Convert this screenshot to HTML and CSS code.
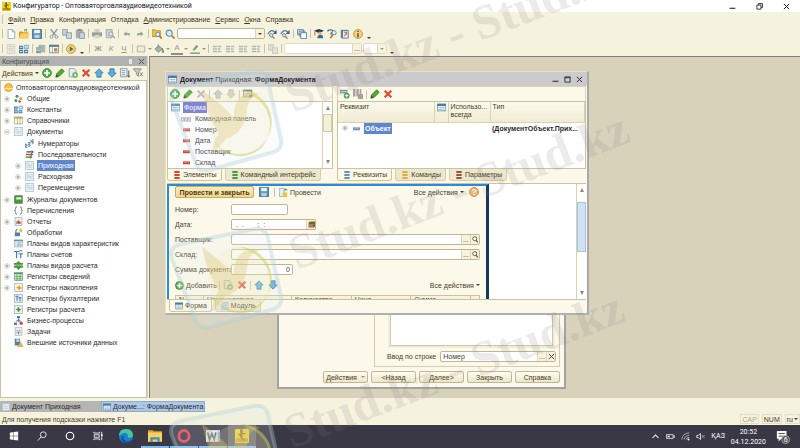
FILE: index.html
```html
<!DOCTYPE html>
<html lang="ru">
<head>
  <meta charset="utf-8">
  <title>Конфигуратор</title>
  <link rel="stylesheet" href="styles.css">
</head>
<body>
  <svg class="sprite" aria-hidden="true">
    <symbol id="i-1c" viewBox="0 0 12 12"><rect width="12" height="12" rx="1" fill="#f0d018"/><path d="M1 11V8h10v3z" fill="#b89400"/><path d="M5 1h1v6H5zM3 4l5 6M6 4h3" stroke="#5c4a08" fill="none"/></symbol>
    <symbol id="i-new" viewBox="0 0 12 12"><path d="M2.500.500h5l3 3v8h-8z" fill="#fff" stroke="#7fa3bd"/><path d="M7.500.500v3h3" fill="#cfe2ee" stroke="#7fa3bd"/></symbol>
    <symbol id="i-open" viewBox="0 0 12 12"><path d="M0 3h4l1 1h6v7H0z" fill="#d99a1c"/><path d="M2 5h10l-1 6H0z" fill="#f6cf62"/><path d="M7 3V0h2v3" fill="none" stroke="#4b8f3a"/></symbol>
    <symbol id="i-save" viewBox="0 0 12 12"><path d="M.500.500h11v11h-11z" fill="#5f94b8" stroke="#34698c"/><path d="M2.500 1h7v4h-7z" fill="#e9f3f8"/><path d="M3 7h6v4H3z" fill="#b9d2e0"/></symbol>
    <symbol id="i-cut" viewBox="0 0 12 12"><path d="M2 0l6 8M10 0L4 8" stroke="#8795a0" stroke-width="1.500"/><circle cx="3" cy="9.500" r="1.700" fill="none" stroke="#7c93a8"/><circle cx="9" cy="9.500" r="1.700" fill="none" stroke="#7c93a8"/></symbol>
    <symbol id="i-copy" viewBox="0 0 12 12"><path d="M.500.500h6v7h-6z" fill="#c3ccd0" stroke="#8ea0aa"/><path d="M5.500 4.500h6v7h-6z" fill="#cdd9de" stroke="#7c96a6"/></symbol>
    <symbol id="i-paste" viewBox="0 0 12 12"><path d="M1 1h9v10H1z" fill="#a8adad"/><path d="M3 0h5v2H3z" fill="#848a8a"/><path d="M5.500 4.500h6v7h-6z" fill="#c7d1d6" stroke="#8799a3"/></symbol>
    <symbol id="i-print" viewBox="0 0 12 12"><path d="M3 0h6v4H3z" fill="#cfcfc6"/><path d="M0 4h12v5H0z" fill="#9a9c9b"/><path d="M3 7h6v4H3z" fill="#d8d6ca"/></symbol>
    <symbol id="i-preview" viewBox="0 0 12 12"><path d="M1.500.500h7v10h-7z" fill="#d0d4d2" stroke="#99a2a4"/><circle cx="7" cy="6" r="2.500" fill="#dfe8ec" stroke="#8a979d"/><path d="M9 8l3 3" stroke="#8a979d" stroke-width="1.500"/></symbol>
    <symbol id="i-undo" viewBox="0 0 12 12"><path d="M1 6l4-4v2.500h5V9H8.500V7H5v2.500z" fill="#8fa095"/></symbol>
    <symbol id="i-redo" viewBox="0 0 12 12"><path d="M11 6L7 2v2.500H2V9h1.500V7H7v2.500z" fill="#86a48d"/></symbol>
    <symbol id="i-findf" viewBox="0 0 12 12"><path d="M0 1h4l1 1h5v7H0z" fill="#f0c04a" stroke="#c08a1c"/><circle cx="7" cy="6.500" r="2.500" fill="#e4f1f8" stroke="#54809c"/><path d="M9 8.500l3 3" stroke="#b0702a" stroke-width="2"/></symbol>
    <symbol id="i-find" viewBox="0 0 12 12"><circle cx="5" cy="5" r="3.700" fill="#d8ebf7" stroke="#6089a6" stroke-width="1.300"/><path d="M8 8l3.500 3.500" stroke="#bd7d33" stroke-width="2"/></symbol>
    <symbol id="i-lens" viewBox="0 0 12 12"><circle cx="6.500" cy="4.500" r="3.500" fill="#fffdf2" stroke="#5c4d26" stroke-width="1.500"/><path d="M9 7.500l2.500 3.500" stroke="#5c4d26" stroke-width="2"/></symbol>
    <symbol id="i-jump" viewBox="0 0 12 12"><path d="M1 6Q5-1 10 4" fill="none" stroke="#4d7c9c" stroke-width="1.500"/><path d="M11.500 1v5H7z" fill="#2c6288"/><circle cx="5" cy="7.500" r="2" fill="#dbe9f0" stroke="#617c8c"/><path d="M6.500 9l2.500 2.500" stroke="#9a7034" stroke-width="1.500"/></symbol>
    <symbol id="i-wins" viewBox="0 0 12 12"><path d="M.500.500h7v6h-7zM2.500 2.500h7v6h-7z" fill="#d3e5ef" stroke="#4f83a5"/><path d="M4.500 4.500h7v7h-7z" fill="#fff" stroke="#3f7496"/></symbol>
    <symbol id="i-grad" viewBox="0 0 12 12"><path d="M0 2l6-2 6 2-6 3z" fill="#23384d"/><circle cx="7" cy="5" r="2" fill="#e7a870"/><path d="M4 11q0-4 4-4 3 0 3 4z" fill="#2a6f9c"/><path d="M1 3v5" stroke="#c64f26"/></symbol>
    <symbol id="i-qmag" viewBox="0 0 12 12"><path d="M1 3q0-2 3-2t3 2q0 1-2 2v2" fill="none" stroke="#447899" stroke-width="1.700"/><circle cx="8.500" cy="4.500" r="2.500" fill="#eaf3f7" stroke="#5a7585"/><path d="M7 6.500L4 11" stroke="#ba7c35" stroke-width="2"/></symbol>
    <symbol id="i-book" viewBox="0 0 12 12"><path d="M1 1h8v10H1z" fill="#4e7ea5"/><path d="M3 2h7v9H3z" fill="#e6eef2" stroke="#59778a"/><path d="M5 9l3-5M5 4h3v3" stroke="#c4502b" fill="none"/></symbol>
    <symbol id="i-info" viewBox="0 0 12 12"><circle cx="6" cy="6" r="5.300" fill="#f4d27a" stroke="#b98a3a"/><path d="M6 2v1.500M6 5v5" stroke="#5f4a24" stroke-width="1.700"/></symbol>
    <symbol id="i-help" viewBox="0 0 12 12"><circle cx="6" cy="6" r="5.300" fill="#f7b672" stroke="#c0793b"/><path d="M4 4.500Q4 3 6 3t2 1.500Q8 5.500 6 6.500V7.500M6 8.500V10" stroke="#fff" stroke-width="1.300" fill="none"/></symbol>
    <symbol id="i-form" viewBox="0 0 12 12"><path d="M.500 1.500h11v9H.500z" fill="#edf4f8" stroke="#5d88a8"/><path d="M0 1h12v3H0z" fill="#4a7da4"/><path d="M2 6h8M2 8.500h8" stroke="#8fb0c4"/></symbol>
    <symbol id="i-check" viewBox="0 0 12 12"><path d="M.500 1.500h10v8H.500z" fill="#edf4f8" stroke="#5d7488"/><path d="M0 1h11v2H0z" fill="#5d7488"/><path d="M2 5.500h6M2 7.500h4" stroke="#8fa4b4"/><path d="M7 7h2V5l3 3-3 3V9H7z" fill="#94583a"/></symbol>
    <symbol id="i-mod" viewBox="0 0 12 12"><path d="M1.500.500h9v11h-9z" fill="#d8e5ed" stroke="#90abbd"/><path d="M3 3h6M3 5.500h6M3 8h6" stroke="#86a5ba"/></symbol>
    <symbol id="i-db" viewBox="0 0 12 12"><path d="M3 1h8v9H3z" fill="#abb5b5"/><path d="M0 4h6v7H0z" fill="#8b9b9d"/><path d="M0 6h6M0 8h6" stroke="#c8d0cf"/></symbol>
    <symbol id="i-tbl" viewBox="0 0 12 12"><path d="M.500 1.500h11v9H.500z" fill="#f4f6f4" stroke="#6f8796"/><path d="M0 1h12v2.500H0z" fill="#5e7f96"/><path d="M6 5h4v4H6z" fill="#c98450"/><path d="M4 3v8" stroke="#8fa4b0"/></symbol>
    <symbol id="i-play" viewBox="0 0 12 12"><circle cx="6" cy="6" r="5.300" fill="#ffd257" stroke="#aa9153"/><path d="M4.500 3v6L9 6z" fill="#2f6fa6"/></symbol>
    <symbol id="i-box" viewBox="0 0 12 12"><path d="M1.500 2.500h9v7h-9z" fill="#efecd9" stroke="#a9a896"/></symbol>
    <symbol id="i-fill" viewBox="0 0 12 12"><path d="M1 6l5-4 4 4-5 4z" fill="#aab5a3" stroke="#7b8878"/><path d="M10 5l2 5h-2zM5 0v5" fill="#6f8f7a" stroke="#7b8878"/></symbol>
    <symbol id="i-pen2" viewBox="0 0 12 12"><path d="M3 7l5-6 2 2-5 5z" fill="#8d978b"/><path d="M0 10h12v2H0z" fill="#8da78f"/></symbol>
    <symbol id="i-al" viewBox="0 0 12 12"><path d="M1 2h5v2H1zM1 5h5v2H1zM1 8h5v2H1zM7 2h4v2H7zM7 5h3v2H7zM7 8h4v2H7z" fill="#b3b9b3"/></symbol>
    <symbol id="i-add" viewBox="0 0 12 12"><circle cx="6" cy="6" r="5.300" fill="#55b14c" stroke="#2f8436"/><path d="M6 2.500v7M2.500 6h7" stroke="#fff" stroke-width="2"/></symbol>
    <symbol id="i-pen" viewBox="0 0 12 12"><path d="M1 11l1-4 6-6 3 3-6 6z" fill="#4fae2c" stroke="#2b7a1d"/><path d="M1 11l1-3 2 2z" fill="#3b3b20"/></symbol>
    <symbol id="i-addcp" viewBox="0 0 12 12"><path d="M1.500.500h6l2 2v8h-8z" fill="#e5eef3" stroke="#7d9db2"/><circle cx="8.500" cy="8.500" r="3.300" fill="#4da845"/><path d="M8.500 6.500v4M6.500 8.500h4" stroke="#fff" stroke-width="1.200"/></symbol>
    <symbol id="i-addattr" viewBox="0 0 12 12"><path d="M0 1h9v4H0z" fill="#7a9ab0"/><path d="M1 3h7" stroke="#dbe7ee"/><circle cx="8" cy="8" r="3.500" fill="#4da845"/><path d="M8 6v4M6 8h4" stroke="#fff" stroke-width="1.200"/></symbol>
    <symbol id="i-del" viewBox="0 0 12 12"><path d="M2 2l8 8M10 2l-8 8" stroke="#df4a34" stroke-width="2.600"/></symbol>
    <symbol id="i-delg" viewBox="0 0 12 12"><path d="M2 2l8 8M10 2l-8 8" stroke="#b4b5b0" stroke-width="2.400"/></symbol>
    <symbol id="i-up" viewBox="0 0 12 12"><path d="M6 1l5 5H8.500v5h-5V6H1z" fill="#60aede" stroke="#2a7cb4"/></symbol>
    <symbol id="i-down" viewBox="0 0 12 12"><path d="M6 11l5-5H8.500V1h-5v5H1z" fill="#60aede" stroke="#2a7cb4"/></symbol>
    <symbol id="i-sort" viewBox="0 0 12 12"><path d="M.500.500h8v10h-8z" fill="#dfe9ee" stroke="#7999ad"/><path d="M2 3h4M2 5.500h4M2 8h4" stroke="#86a5ba"/><path d="M10.500 3v8M9 9l1.500 2L12 9" stroke="#264e6e" fill="none"/></symbol>
    <symbol id="i-filter" viewBox="0 0 12 12"><path d="M0 1h10L6.500 5v5L4 8V5z" fill="#c9ccc0" stroke="#83877c"/><path d="M8 5l4 5M12 5l-4 5" stroke="#617a8d"/></symbol>
    <symbol id="i-root" viewBox="0 0 12 12"><circle cx="6" cy="6" r="5.300" fill="#f8c33a" stroke="#c99629"/><path d="M1 7.500h10" stroke="#fff1b8" stroke-width="1.500"/></symbol>
    <symbol id="i-common" viewBox="0 0 12 12"><circle cx="4" cy="3" r="2" fill="#3f86b8"/><circle cx="2.500" cy="8.500" r="2" fill="#4aa04a"/><circle cx="9" cy="6" r="2" fill="#e2a32d"/><circle cx="7.500" cy="10" r="1.700" fill="#d04a33"/></symbol>
    <symbol id="i-const" viewBox="0 0 12 12"><path d="M0 2h5v4H0zM0 7h5v4H0zM6 7h5v4H6z" fill="#44799f"/><path d="M6 1h6v5H6z" fill="#8fb8d2"/><path d="M1 4h3M1 9h3M7 9h3M7 3.500h4" stroke="#fff"/></symbol>
    <symbol id="i-ref" viewBox="0 0 12 12"><path d="M.500 1.500h11v9H.500z" fill="#fffbe8" stroke="#a2a489"/><path d="M0 1h12v2.500H0z" fill="#c0ae62"/><path d="M4.500 2v9M8 2v9" stroke="#a2a489"/></symbol>
    <symbol id="i-doc" viewBox="0 0 12 12"><path d="M.500.500h11v11H.500z" fill="#edf4f8" stroke="#9bb4c5"/><path d="M2 3h4M2 5.500h8M2 8h8M8 3h2" stroke="#a9c1d0"/></symbol>
    <symbol id="i-num" viewBox="0 0 12 12"><path d="M0 7h2.500v2H.500v2H3M4 4.500h2.500v5H4M4 7h2M8 1v3h3M10.500 0v7" fill="none" stroke="#336f9f" stroke-width="1.200"/></symbol>
    <symbol id="i-seq" viewBox="0 0 12 12"><path d="M2 2.500h8" stroke="#2f76aa" stroke-width="2"/><path d="M9 0l3 2.500L9 5z" fill="#2f76aa"/><path d="M1 6h8" stroke="#d8412e" stroke-width="2"/><path d="M8 3.500L11 6 8 8.500z" fill="#d8412e"/><path d="M1 9.500h7" stroke="#44993c" stroke-width="2"/><path d="M7 7l3 2.500L7 12z" fill="#44993c"/></symbol>
    <symbol id="i-jour" viewBox="0 0 12 12"><path d="M1 1h10v10H1z" fill="#4c9c3a" stroke="#2e7328"/><path d="M3 3h7v3H3z" fill="#e3f1d8"/></symbol>
    <symbol id="i-enum" viewBox="0 0 12 12"><path d="M4 1Q2 1 2 3v1.500Q2 6 .500 6 2 6 2 7.500V9q0 2 2 2M8 1q2 0 2 2v1.500Q10 6 11.500 6 10 6 10 7.500V9q0 2-2 2" fill="none" stroke="#5c87a5" stroke-width="1.300"/></symbol>
    <symbol id="i-rep" viewBox="0 0 12 12"><path d="M1.500.500h9v11h-9z" fill="#e6eef2" stroke="#96aebd"/><path d="M3 9V6h2v3z" fill="#4c9c3a"/><path d="M5 9V4l4 3v2z" fill="#d8412e"/></symbol>
    <symbol id="i-col" viewBox="0 0 12 12"><path d="M0 0h3v9H0zM4 0h3v9H4zM8 0h2v6H8z" fill="#a3a3a0"/><path d="M6 6h6v6H6z" fill="#b9998f"/></symbol>
    <symbol id="i-proc" viewBox="0 0 12 12"><path d="M1 6h7v5H1z" fill="#4d83a8"/><path d="M2.500 6V4q0-2 2-2" fill="none" stroke="#3d6684" stroke-width="1.300"/><path d="M9 0l1 2 2 .500-1.500 1.500.500 2L9 5 7 6l.500-2L6 2.500 8 2z" fill="#f3b62e"/></symbol>
    <symbol id="i-char" viewBox="0 0 12 12"><path d="M.500 1.500h11v9H.500z" fill="#edf4f8" stroke="#90abbd"/><path d="M0 1h12v2H0z" fill="#6a93ae"/><path d="M2 5h1M4 5h6M2 7h1M4 7h6M2 9h1M4 9h6" stroke="#7fa0b5"/></symbol>
    <symbol id="i-acc" viewBox="0 0 12 12"><path d="M0 2h7M3.500 2v9M6 5h6M9 5v6M7 1h4" fill="none" stroke="#3e7aa5" stroke-width="1.500"/></symbol>
    <symbol id="i-calc" viewBox="0 0 12 12"><path d="M6 0l3 2.500h3v2.500H0V2.500h3zM6 12l3-3h3V6.500H0V9h3z" fill="#4a9a35"/><path d="M1 5.700h10" stroke="#2e7328"/></symbol>
    <symbol id="i-rinf" viewBox="0 0 12 12"><path d="M.500.500h11v11H.500z" fill="#e6f0e3" stroke="#6f9a80"/><path d="M0 1h12v2H0z" fill="#5e8f86"/><path d="M4 3v9M8 3v9M1 6h10M1 9h10" stroke="#4c9c3a"/></symbol>
    <symbol id="i-racc" viewBox="0 0 12 12"><path d="M.500.500h11v11H.500z" fill="#fbf4dc" stroke="#90abbd"/><path d="M3 6l5-3v2h2v3H8v2z" fill="#e9a52c"/></symbol>
    <symbol id="i-rbuh" viewBox="0 0 12 12"><path d="M.500.500h11v11H.500z" fill="#e6eef5" stroke="#90abbd"/><path d="M2 3h4M4 3v6M6 5h4M8 5v5" fill="none" stroke="#3e7aa5" stroke-width="1.300"/></symbol>
    <symbol id="i-rcal" viewBox="0 0 12 12"><path d="M.500.500h11v11H.500z" fill="#eef4ea" stroke="#90abbd"/><path d="M2 6l2-1h1V3h2v2l3 1-2 1H7v2H5V7z" fill="#3d9130"/></symbol>
    <symbol id="i-bp" viewBox="0 0 12 12"><path d="M4 0h4v3H4zM0 9h4v3H0z" fill="#4581ab"/><path d="M6 3v4M2 9l4-4 4 4" stroke="#4581ab" fill="none"/><path d="M3 6l3-2 3 2-3 2z" fill="#5d92b5"/><circle cx="9.500" cy="9.500" r="2.300" fill="#d8412e"/></symbol>
    <symbol id="i-task" viewBox="0 0 12 12"><path d="M1.500.500h9v11h-9z" fill="#e6eef2" stroke="#a5b8c4"/><path d="M3 5h6M3 7.500h6" stroke="#8aa7ba"/><path d="M6 6v4" stroke="#d8412e"/></symbol>
    <symbol id="i-ext" viewBox="0 0 12 12"><path d="M1 1h7v9H1z" fill="#4d83a8"/><path d="M3 2h4v3H3z" fill="#d3e5ef"/><path d="M8.500 5l3.500 6.500H5z" fill="#f3b62e" stroke="#b5811a" stroke-width=".5"/></symbol>
    <symbol id="i-stack" viewBox="0 0 12 12"><path d="M2 0h8v3H2zM2 4.500h8v3H2zM2 9h8v3H2z" fill="currentColor"/></symbol>
    <symbol id="i-item" viewBox="0 0 12 12"><path d="M0 4h12v5H0z" fill="currentColor"/><path d="M1 5.500h10" stroke="#fff" stroke-opacity=".5"/></symbol>
    <symbol id="i-panel" viewBox="0 0 12 12"><path d="M0 4h12v5H0z" fill="#a8a8a8"/><path d="M1 5h2v3H1zM5 5h2v3H5zM9 5h2v3H9z" fill="#e6e6e6"/></symbol>
    <symbol id="i-post" viewBox="0 0 12 12"><path d="M0 .500h7v11H.500z" fill="#e5eef3" stroke="#7d9db2"/><path d="M5 6h6v6H5z" fill="#edc13e"/><path d="M6 3l3-2.500L12 3z" fill="#4a9a35"/></symbol>
    <symbol id="i-plus" viewBox="0 0 12 12"><circle cx="6" cy="6" r="5" fill="#fafafa" stroke="#b6b6b0"/><path d="M6 3v6M3 6h6" stroke="#6f6f6a" stroke-width="1.300"/></symbol>
    <symbol id="i-minus" viewBox="0 0 12 12"><circle cx="6" cy="6" r="5" fill="#fafafa" stroke="#b6b6b0"/><path d="M3 6h6" stroke="#6f6f6a" stroke-width="1.300"/></symbol>
    <symbol id="i-cal" viewBox="0 0 12 12"><path d="M1 3l2-2h9v8l-2 2H1z" fill="#786631"/><path d="M2 5h7v5H2z" fill="#a08e54"/></symbol>
    <symbol id="i-min" viewBox="0 0 12 12"><path d="M1 9h10" stroke="currentColor" stroke-width="1.700"/></symbol>
    <symbol id="i-max" viewBox="0 0 12 12"><path d="M1.500 1.500h9v9h-9zM1 3h10" fill="none" stroke="currentColor" stroke-width="1.400"/></symbol>
    <symbol id="i-restore" viewBox="0 0 12 12"><path d="M1.500 3.500h7v7h-7zM4 3V1h7v7H9" fill="none" stroke="currentColor" stroke-width="1.400"/></symbol>
    <symbol id="i-close" viewBox="0 0 12 12"><path d="M1.500 1.500l9 9M10.500 1.500l-9 9" stroke="currentColor" stroke-width="1.600"/></symbol>
    <symbol id="mark" viewBox="0 0 120 110">
      <path d="M15 17L88 2q12-2 14 9l13 58q2 10-7 13L44 100q-12 3-15-8L6 32Q2 20 15 17z" fill="#dfe9ec" fill-opacity=".18" stroke="#a9cfd6" stroke-opacity=".35" stroke-width="4"/>
      <circle cx="74" cy="52" r="32" fill="#f1e8b0" fill-opacity=".2"/>
      <path d="M74 20a32 32 0 1 1-30 44q10 24 34 22 24-4 26-30 0-26-30-36z" fill="#c3cc42" fill-opacity=".45"/>
      <path d="M36 20q20 14 32 28-1-18 12-25 10-2 14 1-12 2-13 16-2 22-21 29l-14 16q0-14 7-21Q41 46 36 20z" fill="#dcc678" fill-opacity=".36"/>
    </symbol>
  </svg>

  <div class="app">
    <header class="titlebar">
      <svg class="icon app-icon"><use href="#i-1c"/></svg>
      <span class="app-title">Конфигуратор - Оптоваяторговляаудиовидеотехникой</span>
      <div class="win-buttons">
        <button aria-label="Свернуть"><svg class="icon"><use href="#i-min"/></svg></button>
        <button aria-label="Восстановить"><svg class="icon"><use href="#i-restore"/></svg></button>
        <button aria-label="Закрыть"><svg class="icon"><use href="#i-close"/></svg></button>
      </div>
    </header>

    <nav class="menubar">
      <span class="grip"></span>
      <button><u>Ф</u>айл</button>
      <button><u>П</u>равка</button>
      <button>Конфигурация</button>
      <button>Отладка</button>
      <button><u>А</u>дминистрирование</button>
      <button><u>С</u>ервис</button>
      <button><u>О</u>кна</button>
      <button>Сп<u>р</u>авка</button>
    </nav>

    <div class="toolbar">
      <span class="grip"></span>
      <button class="tb" aria-label="Новый"><svg class="icon"><use href="#i-new"/></svg></button>
      <button class="tb" aria-label="Открыть"><svg class="icon"><use href="#i-open"/></svg></button>
      <button class="tb" aria-label="Сохранить"><svg class="icon"><use href="#i-save"/></svg></button>
      <span class="sep"></span>
      <button class="tb" aria-label="Вырезать"><svg class="icon"><use href="#i-cut"/></svg></button>
      <button class="tb" aria-label="Копировать"><svg class="icon"><use href="#i-copy"/></svg></button>
      <button class="tb" aria-label="Вставить"><svg class="icon"><use href="#i-paste"/></svg></button>
      <span class="sep"></span>
      <button class="tb" aria-label="Печать"><svg class="icon"><use href="#i-print"/></svg></button>
      <button class="tb" aria-label="Просмотр"><svg class="icon"><use href="#i-preview"/></svg></button>
      <span class="sep"></span>
      <button class="tb small" aria-label="Отменить"><svg class="icon"><use href="#i-undo"/></svg></button>
      <button class="tb small" aria-label="Повторить"><svg class="icon"><use href="#i-redo"/></svg></button>
      <span class="sep"></span>
      <button class="tb" aria-label="Найти в файлах"><svg class="icon"><use href="#i-findf"/></svg></button>
      <button class="tb" aria-label="Найти"><svg class="icon"><use href="#i-find"/></svg></button>
      <div class="combo search">
        <input type="text" aria-label="Поиск">
        <button aria-label="История поиска"><i class="caret"></i></button>
      </div>
      <button class="tb" aria-label="Найти далее"><svg class="icon"><use href="#i-jump"/></svg></button>
      <button class="tb" aria-label="Найти назад"><svg class="icon"><use href="#i-jump"/></svg></button>
      <span class="sep"></span>
      <button class="tb" aria-label="Окна"><svg class="icon"><use href="#i-wins"/></svg></button>
      <span class="sep"></span>
      <button class="tb" aria-label="Синтакс-помощник"><svg class="icon"><use href="#i-grad"/></svg></button>
      <button class="tb" aria-label="Поиск в справке"><svg class="icon"><use href="#i-qmag"/></svg></button>
      <button class="tb" aria-label="Содержание"><svg class="icon"><use href="#i-book"/></svg></button>
      <button class="tb" aria-label="О программе"><svg class="icon"><use href="#i-info"/></svg></button>
      <i class="caret low"></i>
    </div>

    <div class="toolbar second">
      <span class="grip"></span>
      <button class="tb off" aria-label="Модуль"><svg class="icon"><use href="#i-mod"/></svg></button>
      <button class="tb" aria-label="Конфигурация"><svg class="icon"><use href="#i-const"/></svg></button>
      <span class="sep"></span>
      <button class="tb" aria-label="База данных"><svg class="icon"><use href="#i-db"/></svg></button>
      <button class="tb" aria-label="Таблица"><svg class="icon"><use href="#i-tbl"/></svg></button>
      <span class="sep"></span>
      <button class="tb" aria-label="Отладка"><svg class="icon"><use href="#i-play"/></svg></button>
      <i class="caret low"></i>
      <span class="sep"></span>
      <button class="tb letter"><b>Ж</b></button>
      <button class="tb letter"><em>К</em></button>
      <button class="tb letter"><u>Ч</u></button>
      <span class="sep"></span>
      <button class="tb" aria-label="Рамка"><svg class="icon"><use href="#i-box"/></svg></button>
      <i class="caret tan"></i>
      <button class="tb" aria-label="Цвет фона"><svg class="icon"><use href="#i-fill"/></svg></button>
      <i class="caret tan"></i>
      <button class="tb letter color">A</button>
      <i class="caret tan"></i>
      <button class="tb" aria-label="Цвет линии"><svg class="icon"><use href="#i-pen2"/></svg></button>
      <i class="caret tan"></i>
      <span class="sep"></span>
      <button class="tb" aria-label="Влево"><svg class="icon"><use href="#i-al"/></svg></button>
      <button class="tb" aria-label="По центру"><svg class="icon"><use href="#i-al"/></svg></button>
      <button class="tb" aria-label="Вправо"><svg class="icon"><use href="#i-al"/></svg></button>
      <button class="tb" aria-label="По ширине"><svg class="icon"><use href="#i-al"/></svg></button>
      <span class="sep"></span>
      <button class="tb off" aria-label="Копировать формат"><svg class="icon"><use href="#i-copy"/></svg></button>
      <span class="sep"></span>
      <div class="combo font-name">
        <input type="text" aria-label="Шрифт" disabled>
        <button aria-label="Выбрать шрифт" disabled>...</button>
      </div>
      <div class="combo font-size">
        <input type="text" aria-label="Размер шрифта" disabled>
        <button aria-label="Выбрать размер" disabled><i class="caret tan"></i></button>
      </div>
      <i class="caret low"></i>
    </div>

    <main class="work">
      <aside class="sidebar">
        <div class="side-title">
          <span>Конфигурация</span>
          <span class="pin"></span>
          <button aria-label="Закрыть панель"><svg class="icon"><use href="#i-close"/></svg></button>
        </div>
        <div class="side-tools">
          <button class="actions">Действия <i class="caret"></i></button>
          <button class="tb" aria-label="Добавить"><svg class="icon"><use href="#i-add"/></svg></button>
          <button class="tb" aria-label="Изменить"><svg class="icon"><use href="#i-pen"/></svg></button>
          <button class="tb" aria-label="Скопировать"><svg class="icon"><use href="#i-addcp"/></svg></button>
          <button class="tb" aria-label="Удалить"><svg class="icon"><use href="#i-del"/></svg></button>
          <button class="tb" aria-label="Вверх"><svg class="icon"><use href="#i-up"/></svg></button>
          <button class="tb" aria-label="Вниз"><svg class="icon"><use href="#i-down"/></svg></button>
          <button class="tb" aria-label="Сортировка"><svg class="icon"><use href="#i-sort"/></svg></button>
          <button class="tb" aria-label="Отбор"><svg class="icon"><use href="#i-filter"/></svg></button>
        </div>
        <div class="tree">
          <div class="node root"><svg class="icon"><use href="#i-root"/></svg><span>Оптоваяторговляаудиовидеотехникой</span></div>
          <ul>
            <li class="node"><svg class="tog"><use href="#i-plus"/></svg><svg class="icon"><use href="#i-common"/></svg><span>Общие</span></li>
            <li class="node"><svg class="tog"><use href="#i-plus"/></svg><svg class="icon"><use href="#i-const"/></svg><span>Константы</span></li>
            <li class="node"><svg class="tog"><use href="#i-plus"/></svg><svg class="icon"><use href="#i-ref"/></svg><span>Справочники</span></li>
            <li class="node"><svg class="tog"><use href="#i-minus"/></svg><svg class="icon"><use href="#i-doc"/></svg><span>Документы</span></li>
            <li>
              <ul class="nested">
                <li class="node"><span class="tog"></span><svg class="icon"><use href="#i-num"/></svg><span>Нумераторы</span></li>
                <li class="node"><span class="tog"></span><svg class="icon"><use href="#i-seq"/></svg><span>Последовательности</span></li>
                <li class="node selected"><svg class="tog"><use href="#i-plus"/></svg><svg class="icon"><use href="#i-doc"/></svg><span>Приходная</span></li>
                <li class="node"><svg class="tog"><use href="#i-plus"/></svg><svg class="icon"><use href="#i-doc"/></svg><span>Расходная</span></li>
                <li class="node"><svg class="tog"><use href="#i-plus"/></svg><svg class="icon"><use href="#i-doc"/></svg><span>Перемещение</span></li>
              </ul>
            </li>
            <li class="node"><svg class="tog"><use href="#i-plus"/></svg><svg class="icon"><use href="#i-jour"/></svg><span>Журналы документов</span></li>
            <li class="node"><span class="tog"></span><svg class="icon"><use href="#i-enum"/></svg><span>Перечисления</span></li>
            <li class="node"><svg class="tog"><use href="#i-plus"/></svg><svg class="icon"><use href="#i-rep"/></svg><span>Отчеты</span></li>
            <li class="node"><span class="tog"></span><svg class="icon"><use href="#i-proc"/></svg><span>Обработки</span></li>
            <li class="node"><span class="tog"></span><svg class="icon"><use href="#i-char"/></svg><span>Планы видов характеристик</span></li>
            <li class="node"><span class="tog"></span><svg class="icon"><use href="#i-acc"/></svg><span>Планы счетов</span></li>
            <li class="node"><svg class="tog"><use href="#i-plus"/></svg><svg class="icon"><use href="#i-calc"/></svg><span>Планы видов расчета</span></li>
            <li class="node"><svg class="tog"><use href="#i-plus"/></svg><svg class="icon"><use href="#i-rinf"/></svg><span>Регистры сведений</span></li>
            <li class="node"><svg class="tog"><use href="#i-plus"/></svg><svg class="icon"><use href="#i-racc"/></svg><span>Регистры накопления</span></li>
            <li class="node"><span class="tog"></span><svg class="icon"><use href="#i-rbuh"/></svg><span>Регистры бухгалтерии</span></li>
            <li class="node"><span class="tog"></span><svg class="icon"><use href="#i-rcal"/></svg><span>Регистры расчета</span></li>
            <li class="node"><span class="tog"></span><svg class="icon"><use href="#i-bp"/></svg><span>Бизнес-процессы</span></li>
            <li class="node"><span class="tog"></span><svg class="icon"><use href="#i-task"/></svg><span>Задачи</span></li>
            <li class="node"><span class="tog"></span><svg class="icon"><use href="#i-ext"/></svg><span>Внешние источники данных</span></li>
          </ul>
        </div>
      </aside>

      <div class="desktop">
        <section class="window doc-window">
          <div class="doc-body">
            <div class="doc-left"></div>
            <div class="doc-page">
              <div class="doc-list"></div>
              <div class="doc-input">
                <label for="by-string">Ввод по строке</label>
                <div class="combo">
                  <input type="text" id="by-string" value="Номер">
                  <button aria-label="Выбрать">...</button>
                  <button aria-label="Очистить"><svg class="icon"><use href="#i-close"/></svg></button>
                </div>
              </div>
            </div>
          </div>
          <div class="doc-buttons">
            <button class="btn">Действия <i class="caret tan"></i></button>
            <button class="btn">&lt;Назад</button>
            <button class="btn">Далее&gt;</button>
            <button class="btn">Закрыть</button>
            <button class="btn">Справка</button>
          </div>
        </section>

        <section class="window form-window">
          <div class="form-title">
            <svg class="icon"><use href="#i-form"/></svg>
            <h1><b>Документ</b> Приходная: <b>ФормаДокумента</b></h1>
            <button aria-label="Свернуть"><svg class="icon"><use href="#i-min"/></svg></button>
            <button aria-label="Развернуть"><svg class="icon"><use href="#i-max"/></svg></button>
            <button aria-label="Закрыть"><svg class="icon"><use href="#i-close"/></svg></button>
          </div>

          <div class="panes">
            <div class="pane">
              <div class="pane-tools">
                <button class="tb" aria-label="Добавить"><svg class="icon"><use href="#i-add"/></svg></button>
                <button class="tb" aria-label="Изменить"><svg class="icon"><use href="#i-pen"/></svg></button>
                <button class="tb" aria-label="Удалить"><svg class="icon"><use href="#i-delg"/></svg></button>
                <span class="sep"></span>
                <button class="tb off" aria-label="Вверх"><svg class="icon"><use href="#i-up"/></svg></button>
                <button class="tb off" aria-label="Вниз"><svg class="icon"><use href="#i-down"/></svg></button>
                <span class="sep"></span>
                <button class="tb" aria-label="Проверка"><svg class="icon"><use href="#i-check"/></svg></button>
              </div>
              <div class="pane-body">
                <ul class="elements">
                  <li class="node selected"><svg class="icon"><use href="#i-form"/></svg><span>Форма</span></li>
                  <li class="node child panel"><svg class="icon"><use href="#i-panel"/></svg><span>Командная панель</span></li>
                  <li class="node child red"><svg class="icon"><use href="#i-item"/></svg><span>Номер</span></li>
                  <li class="node child red"><svg class="icon"><use href="#i-item"/></svg><span>Дата</span></li>
                  <li class="node child red"><svg class="icon"><use href="#i-item"/></svg><span>Поставщик</span></li>
                  <li class="node child red"><svg class="icon"><use href="#i-item"/></svg><span>Склад</span></li>
                </ul>
                <div class="scroll"><i class="arrow up"></i><span class="thumb"></span><i class="arrow down"></i></div>
              </div>
              <div class="tabs">
                <button class="tab active red"><svg class="icon"><use href="#i-stack"/></svg>Элементы</button>
                <button class="tab green"><svg class="icon"><use href="#i-stack"/></svg>Командный интерфейс</button>
              </div>
            </div>

            <div class="pane">
              <div class="pane-tools">
                <button class="tb" aria-label="Добавить реквизит"><svg class="icon"><use href="#i-addattr"/></svg></button>
                <button class="tb" aria-label="Добавить колонку"><svg class="icon"><use href="#i-col"/></svg></button>
                <span class="sep"></span>
                <button class="tb" aria-label="Изменить"><svg class="icon"><use href="#i-pen"/></svg></button>
                <button class="tb" aria-label="Удалить"><svg class="icon"><use href="#i-del"/></svg></button>
              </div>
              <div class="pane-body">
                <table class="attrs">
                  <thead>
                    <tr>
                      <th class="c-name">Реквизит</th>
                      <th class="c-icon"><svg class="icon"><use href="#i-form"/></svg></th>
                      <th class="c-use">Использо...<br>всегда</th>
                      <th class="c-type">Тип</th>
                    </tr>
                  </thead>
                  <tbody>
                    <tr>
                      <td><div class="node selected blue"><svg class="tog"><use href="#i-plus"/></svg><svg class="icon"><use href="#i-item"/></svg><span>Объект</span></div></td>
                      <td></td>
                      <td></td>
                      <td>(ДокументОбъект.Прих...</td>
                    </tr>
                  </tbody>
                </table>
              </div>
              <div class="tabs">
                <button class="tab active blue"><svg class="icon"><use href="#i-stack"/></svg>Реквизиты</button>
                <button class="tab gold"><svg class="icon"><use href="#i-stack"/></svg>Команды</button>
                <button class="tab brown"><svg class="icon"><use href="#i-stack"/></svg>Параметры</button>
              </div>
            </div>
          </div>

          <div class="preview">
            <form class="preview-form">
              <div class="cmd-bar">
                <button type="button" class="btn primary">Провести и закрыть</button>
                <button type="button" class="tb" aria-label="Записать"><svg class="icon"><use href="#i-save"/></svg></button>
                <span class="sep"></span>
                <button type="button" class="cmd"><svg class="icon"><use href="#i-post"/></svg>Провести</button>
                <span class="spring"></span>
                <button type="button" class="cmd">Все действия <i class="caret"></i></button>
                <button type="button" class="tb" aria-label="Справка"><svg class="icon"><use href="#i-help"/></svg></button>
              </div>
              <div class="field">
                <label for="f-num">Номер:</label>
                <div class="combo w-num"><input type="text" id="f-num"></div>
              </div>
              <div class="field">
                <label for="f-date">Дата:</label>
                <div class="combo w-date required"><input type="text" id="f-date" value=" .  .       :  :"><button type="button" aria-label="Календарь"><svg class="icon"><use href="#i-cal"/></svg></button></div>
              </div>
              <div class="field">
                <label for="f-sup">Поставщик:</label>
                <div class="combo w-full"><input type="text" id="f-sup"><button type="button" aria-label="Выбрать">...</button><button type="button" aria-label="Открыть"><svg class="icon"><use href="#i-lens"/></svg></button></div>
              </div>
              <div class="field">
                <label for="f-store">Склад:</label>
                <div class="combo w-full"><input type="text" id="f-store"><button type="button" aria-label="Выбрать">...</button><button type="button" aria-label="Открыть"><svg class="icon"><use href="#i-lens"/></svg></button></div>
              </div>
              <div class="field">
                <label for="f-sum">Сумма документа:</label>
                <div class="combo w-sum"><input type="text" id="f-sum" class="num" value="0"></div>
              </div>
              <div class="cmd-bar rows-bar">
                <button type="button" class="cmd"><svg class="icon"><use href="#i-add"/></svg>Добавить</button>
                <span class="sep"></span>
                <button type="button" class="tb" aria-label="Скопировать"><svg class="icon"><use href="#i-addcp"/></svg></button>
                <button type="button" class="tb" aria-label="Удалить"><svg class="icon"><use href="#i-del"/></svg></button>
                <span class="sep"></span>
                <button type="button" class="tb" aria-label="Вверх"><svg class="icon"><use href="#i-up"/></svg></button>
                <button type="button" class="tb" aria-label="Вниз"><svg class="icon"><use href="#i-down"/></svg></button>
                <span class="spring"></span>
                <button type="button" class="cmd">Все действия <i class="caret"></i></button>
              </div>
              <table class="goods">
                <thead><tr><th class="g-n">N</th><th class="g-w">Номенклатура</th><th>Количество</th><th>Цена</th><th>Сумма</th><th class="g-s"></th></tr></thead>
              </table>
            </form>
            <div class="preview-space"></div>
            <div class="scroll pale"><i class="arrow up"></i><span class="thumb"></span><i class="arrow down"></i></div>
          </div>

          <div class="tabs bottom">
            <button class="tab active"><svg class="icon"><use href="#i-form"/></svg>Форма</button>
            <button class="tab"><svg class="icon"><use href="#i-mod"/></svg>Модуль</button>
          </div>
        </section>
      </div>
    </main>

    <div class="mdi-tabs">
      <button class="mdi-tab"><svg class="icon"><use href="#i-doc"/></svg>Документ Приходная</button>
      <button class="mdi-tab current"><svg class="icon"><use href="#i-form"/></svg>Докуме...: ФормаДокумента</button>
    </div>

    <footer class="status">
      <span class="hint">Для получения подсказки нажмите F1</span>
      <span class="ind off">CAP</span>
      <span class="ind">NUM</span>
      <button class="ind">ru <i class="caret"></i></button>
    </footer>

    <div class="taskbar">
      <button class="task" aria-label="Пуск"><svg viewBox="0 0 12 12"><path d="M1 2l4.500-.700v4.400H1zM6 1.200l5-.700v5.200H6zM1 6.200h4.500v4.500L1 10zM6 6.200h5v5.300l-5-.700z" fill="#fff"/></svg></button>
      <button class="task" aria-label="Поиск"><svg viewBox="0 0 12 12"><circle cx="7.500" cy="4.500" r="3.500" fill="none" stroke="#fff"/><path d="M5 7l-4 4.500" stroke="#fff"/></svg></button>
      <button class="task" aria-label="Кортана"><svg viewBox="0 0 12 12"><circle cx="6" cy="6" r="4.500" fill="none" stroke="#fff" stroke-width="1.400"/></svg></button>
      <button class="task" aria-label="Представление задач"><svg viewBox="0 0 12 12"><path d="M1 1v1.500h7V1M1 11V9.500h7V11M1.500 4.500h6v3h-6zM10.500 1v10" fill="none" stroke="#fff"/><path d="M9.500 4h2v2h-2z" fill="#fff"/></svg></button>
      <button class="task" aria-label="Edge"><svg class="big" viewBox="0 0 12 12"><circle cx="6" cy="6" r="6" fill="#1b7fd0"/><path d="M0 6Q0 0 6 0q5.500 0 6 5 0 2.500-3 2.500-1.500 0-1.500-1Q8 3.500 5 3.500 2 3.500 0 6z" fill="#43c79a"/><path d="M4 6q-1 3 2 4.500 3 .500 5-1.500Q9 12 6 12 2 11 2 7.500 2.500 6 4 6z" fill="#0b4f9c"/></svg></button>
      <button class="task open" aria-label="Проводник"><svg class="big" viewBox="0 0 12 12"><path d="M0 1h4l1 1h7v3H0z" fill="#e3a21b"/><path d="M0 3h12v8H0z" fill="#fbd25c"/><path d="M2 11V7h8v4H8V9H4v2z" fill="#3b8ed6"/></svg></button>
      <button class="task open" aria-label="Opera"><svg class="big" viewBox="0 0 12 12"><ellipse cx="6" cy="6" rx="4.400" ry="4.700" fill="none" stroke="#e8424e" stroke-width="2.500"/></svg></button>
      <button class="task open" aria-label="Word"><svg class="big" viewBox="0 0 12 12"><path d="M0 1h12v10H0z" fill="#eaf1fa"/><path d="M1.500 3l1.500 6 2-5 2 5 1.500-6" fill="none" stroke="#2b579a" stroke-width="1.500"/><path d="M10 2h2v9h-2z" fill="#7c9fce"/></svg></button>
      <button class="task open active" aria-label="1С"><svg class="big"><use href="#i-1c"/></svg></button>
      <span class="spring"></span>
      <div class="tray">
        <svg viewBox="0 0 12 12"><path d="M2 8l4-4 4 4" fill="none" stroke="#fff" stroke-width="1.400"/></svg>
        <svg viewBox="0 0 12 12"><path d="M.500 3.500h9v5h-9zM10 5h1.500v2H10" fill="none" stroke="#fff"/><path d="M2 5h3v2H2z" fill="#fff"/></svg>
        <svg viewBox="0 0 12 12"><path d="M1 10Q2 2 11 1M4 10q1-5 7-6M7 10q0-2.500 4-3" fill="none" stroke="#c9c9cf"/><circle cx="10" cy="10" r="1.300" fill="#fff"/></svg>
        <svg viewBox="0 0 12 12"><path d="M1 4.500h2L6 2v8L3 7.500H1z" fill="none" stroke="#fff"/><path d="M7.500 4l4 4M11.500 4l-4 4" stroke="#bbb"/></svg>
        <span class="lang">ҚАЗ</span>
        <div class="clock"><span>20:52</span><span>04.12.2020</span></div>
        <svg class="note" viewBox="0 0 16 16"><path d="M1 1h11v9H6l-3 3v-3H1z" fill="#fff"/><path d="M3 4h7M3 7h7" stroke="#3a3844"/><circle cx="11" cy="11" r="4.500" fill="#56545f" stroke="#aaa"/><text x="11" y="14" text-anchor="middle" class="note-n">6</text></svg>
      </div>
    </div>
  </div>

  <svg class="overlay" aria-hidden="true">
    <use href="#mark" x="166" y="70" width="120" height="110"/>
    <use href="#mark" x="166" y="227" width="120" height="110"/>
    <use href="#mark" x="166" y="404" width="120" height="110"/>
    <text transform="translate(293 113) rotate(-21)">Stud.kz - Stud.kz</text>
    <text transform="translate(297 270) rotate(-21)">Stud.kz - Stud.kz</text>
    <text transform="translate(292 449) rotate(-21)">Stud.kz - Stud.kz</text>
  </svg>
</body>
</html>
```
FILE: styles.css
```css
* {
  box-sizing: border-box;
}

body {
  margin: 0;
  font-family: "Liberation Sans", Arial, sans-serif;
  font-size: 7px;
  line-height: 11px;
  color: #2b2b2b;
  background: #f5f2dd;
}

button,
input {
  font: inherit;
  color: inherit;
  margin: 0;
  padding: 0;
  border: 0;
  background: none;
}

button {
  display: flex;
  align-items: center;
  justify-content: center;
  white-space: nowrap;
}

input {
  min-width: 0;
  outline: none;
}

ul {
  list-style: none;
  margin: 0;
  padding: 0;
}

.sprite {
  display: none;
}

.icon {
  flex: none;
  display: block;
  width: 9px;
  height: 9px;
}

.app {
  display: flex;
  flex-direction: column;
  height: 100vh;
  overflow: hidden;
}

.spring {
  flex: 1;
}

.caret {
  flex: none;
  border: 2px solid transparent;
  border-top-color: #4a3c1e;
  border-bottom: 0;
}

.caret.tan {
  border-top-color: #a89762;
}

.caret.low {
  align-self: flex-end;
  margin: 0 3px 2px 2px;
}

.grip,
.sep {
  flex: none;
  width: 1px;
  height: 9px;
  background: #c9c3a4;
}

/* top bars */
.titlebar {
  flex: none;
  display: flex;
  align-items: center;
  height: 12px;
  padding-left: 2px;
  background: #fff;
  color: #111;
}

.app-title {
  flex: 1;
  margin-left: 2px;
  font-family: Roboto, "Noto Sans", sans-serif;
}

.win-buttons {
  display: flex;
}

.win-buttons button {
  width: 27px;
}

.win-buttons .icon {
  width: 7px;
  height: 7px;
}

.menubar {
  flex: none;
  display: flex;
  align-items: center;
  gap: 5px;
  height: 14px;
  padding-left: 2px;
  color: #3c3420;
}

.menubar button {
  display: block;
}

.toolbar {
  flex: none;
  display: flex;
  align-items: center;
  gap: 1px;
  height: 15px;
  padding-left: 2px;
}

.toolbar .grip {
  margin-right: 1px;
}

.toolbar .sep {
  margin: 0 1px;
}

.tb {
  flex: none;
  width: 12px;
  height: 12px;
}

.tb .icon {
  width: 10px;
  height: 10px;
}

.tb.small .icon {
  width: 8px;
  height: 8px;
}

.tb.off .icon {
  opacity: .5;
  filter: grayscale(1);
}

.letter {
  color: #9a9b90;
  font-size: 8px;
}

.letter.color {
  border-bottom: 2px solid #8c8c86;
}

.combo {
  display: flex;
  height: 11px;
  border: 1px solid #bdb694;
  border-radius: 2px;
  background: #fff;
  overflow: hidden;
}

.combo input {
  flex: 1;
  width: 0;
  padding: 0 2px;
}

.combo button {
  flex: none;
  width: 9px;
  border-left: 1px solid #dcd6ba;
  background: #f6f2dd;
}

.combo .icon {
  width: 7px;
  height: 7px;
}

.search {
  width: 88px;
}

.second .combo {
  border-color: #e0dbc3;
}

.font-name {
  width: 78px;
}

.font-size {
  width: 24px;
}

/* configuration tree */
.work {
  flex: 1;
  min-height: 0;
  display: flex;
}

.sidebar {
  flex: none;
  width: 148px;
  display: flex;
  flex-direction: column;
  border-right: 1px solid #d8d3b8;
  background: #f5f2dd;
}

.side-title {
  display: flex;
  align-items: center;
  height: 10px;
  padding: 0 2px;
  background: #b1b1b1;
  color: #4d4d4d;
}

.side-title span:first-child {
  flex: 1;
}

.side-title .pin {
  width: 3px;
  height: 5px;
  margin-right: 6px;
  background: #e8e8e8;
}

.side-title .icon {
  width: 7px;
  height: 7px;
}

.side-tools {
  display: flex;
  align-items: center;
  gap: 1px;
  height: 14px;
  padding-left: 2px;
  color: #4a3c1e;
}

.side-tools .actions {
  gap: 2px;
  margin-right: 1px;
}

.tree {
  flex: 1;
  padding: 1px 3px;
  border: 1px solid #c9c3a4;
  background: #fff;
}

.node {
  display: flex;
  align-items: center;
  height: 11px;
  white-space: nowrap;
}

.node .icon {
  margin-right: 3px;
}

.root .icon {
  margin-right: 2px;
}

.node span:last-child {
  padding: 0 1px;
}

.node.selected span:last-child {
  background: #5d86cc;
  color: #fff;
}

.tog {
  flex: none;
  width: 6px;
  height: 6px;
  margin-right: 4px;
}

.nested {
  padding: 1px 0 1px 11px;
}

/* windows */
.desktop {
  flex: 1;
  position: relative;
  margin-left: 1px;
  border-top: 1px solid #837d80;
  border-left: 1px solid #837d80;
  background: #d8d2bb;
  overflow: hidden;
}

.window {
  position: absolute;
  display: flex;
  flex-direction: column;
  background: #fcf9ea;
}

.doc-window {
  left: 127px;
  top: 150px;
  width: 289px;
  height: 182px;
  border: 2px solid #a3a3a6;
}

.doc-body {
  flex: 1;
  display: flex;
}

.doc-left {
  flex: 1;
}

.doc-page {
  display: flex;
  flex-direction: column;
  gap: 5px;
  width: 186px;
  margin-right: 4px;
  padding: 0 3px 4px 12px;
  border: 1px solid #d3cdae;
  border-top: 0;
}

.doc-list {
  flex: 1;
  margin: 0 3px;
  border: 1px solid #cbc7a6;
  outline: 2px solid #eef0da;
  background: #fff;
}

.doc-input {
  display: flex;
  align-items: center;
  gap: 4px;
  color: #4a3c1e;
}

.doc-input .combo {
  flex: 1;
}

.doc-buttons {
  display: flex;
  justify-content: flex-end;
  gap: 3px;
  padding: 4px;
}

.btn {
  width: 45px;
  height: 12px;
  border: 1px solid #bfb895;
  border-radius: 2px;
  background: linear-gradient(#fffdf2, #ece6c8);
  color: #4a3c1e;
}

.btn .caret {
  margin-left: 4px;
}

.form-window {
  left: 15px;
  top: 14px;
  width: 424px;
  height: 244px;
  padding: 0 1px;
  border: 1px solid #e6e2c0;
  border-right: 2px solid #a9a9ac;
  border-bottom: 2px solid #b0b0b2;
}

.form-title {
  display: flex;
  align-items: center;
  height: 14px;
  margin: 0 -1px;
  padding: 0 2px;
  background: #cbcbcb;
  color: #222;
}

.form-title h1 {
  flex: 1;
  margin: 0 0 0 3px;
  font-size: 7px;
  font-weight: normal;
}

.form-title button {
  width: 12px;
}

.form-title button .icon {
  width: 7px;
  height: 7px;
}

.panes {
  display: grid;
  grid-template-columns: 2fr 3fr;
  gap: 4px;
}

.pane {
  min-width: 0;
}

.pane-tools {
  display: flex;
  align-items: center;
  gap: 1px;
  height: 15px;
  padding-left: 1px;
  border: 1px solid #d9d3b4;
  border-bottom: 0;
}

.pane-tools .sep {
  margin: 0 1px;
}

.pane-body {
  display: flex;
  height: 68px;
  border: 1px solid #c9c3a4;
  background: #fff;
}

.elements {
  flex: 1;
  padding-left: 3px;
}

.elements .selected span:last-child {
  background: #6b70cc;
}

.child {
  padding-left: 12px;
}

.red .icon {
  color: #dd4630;
}

.green .icon {
  color: #4a9a35;
}

.blue .icon {
  color: #6596b8;
}

.gold .icon {
  color: #dcae3c;
}

.brown .icon {
  color: #94583a;
}

.child .icon {
  width: 7px;
  height: 7px;
  margin-right: 4px;
}

.panel {
  padding-left: 10px;
}

.panel .icon {
  width: 10px;
  height: 10px;
  margin-right: 3px;
}

.scroll {
  flex: none;
  display: flex;
  flex-direction: column;
  align-items: center;
  width: 10px;
  padding: 2px 0;
  border-left: 1px solid #d9d3b4;
  background: #fff;
}

.scroll .thumb {
  width: 9px;
  height: 18px;
  margin: 4px 0 auto;
  border: 1px solid #d4cdad;
  background: #f4f0da;
}

.scroll .arrow {
  border: 2px solid transparent;
}

.scroll .up {
  border-bottom: 4px solid #8c8878;
  border-top: 0;
  margin-top: 2px;
}

.scroll .down {
  border-top: 4px solid #8c8878;
  border-bottom: 0;
  margin-bottom: 2px;
}

.scroll.pale .thumb {
  height: 50px;
  margin-top: 10px;
  border-color: #a9c3da;
  background: #cfe2f5;
}

.attrs {
  width: 100%;
  height: 30px;
  table-layout: fixed;
  border-collapse: collapse;
}

.attrs th {
  height: 20px;
  padding: 1px 2px 0;
  border-right: 1px solid #d9d3b4;
  border-bottom: 1px solid #d9d3b4;
  background: linear-gradient(#fcfaee, #f0ebd2);
  color: #4a3c1e;
  font-weight: normal;
  line-height: 8px;
  text-align: left;
  vertical-align: top;
}

.attrs td {
  padding: 0 2px;
  font-weight: bold;
  white-space: nowrap;
}

.attrs td .tog {
  margin-left: 2px;
}

.attrs td .icon {
  width: 7px;
  height: 7px;
  margin: 0 4px 0 1px;
}

.c-name {
  width: 96px;
}

.c-icon {
  width: 14px;
}

.c-use {
  width: 42px;
}

.tabs {
  display: flex;
  gap: 3px;
  height: 14px;
  padding-bottom: 2px;
}

.tab {
  gap: 2px;
  padding: 0 4px 0 5px;
  border: 1px solid #d6cfac;
  border-top: 0;
  border-radius: 0 0 3px 3px;
  background: #ece7cf;
  color: #4a3c1e;
}

.tab.active {
  border-color: #d8c680;
  background: #fcf9ea;
}

.tab .icon {
  width: 8px;
  height: 8px;
}

/* form preview */
.preview {
  flex: 1;
  min-height: 0;
  display: flex;
  border-top: 1px solid #c9c3a4;
  border-bottom: 1px solid #c9c3a4;
  background: #fff;
  overflow: hidden;
}

.preview-form {
  flex: 7;
  display: flex;
  flex-direction: column;
  gap: 4px;
  padding: 0 6px;
  border: 2px solid #2a8ae0;
  border-right: 3px solid #17375e;
  border-bottom: 0;
  background: #fcf9ea;
  color: #4a3c1e;
  overflow: hidden;
}

.preview-space {
  flex: 2;
}

.cmd-bar {
  flex: none;
  display: flex;
  align-items: center;
  gap: 4px;
  height: 12px;
  margin-bottom: 2px;
}

.btn.primary {
  width: 79px;
  border-color: #c9ab64;
  background: linear-gradient(#fdedc0, #f3d488);
  font-weight: bold;
}

.cmd {
  gap: 2px;
}

.field {
  flex: none;
  display: flex;
  align-items: center;
}

.field label {
  flex: none;
  width: 56px;
  white-space: nowrap;
}

.w-num {
  width: 57px;
}

.w-date {
  width: 85px;
}

.w-date input {
  white-space: pre;
}

.w-sum {
  width: 62px;
}

.w-full {
  flex: 1;
}

.required {
  border-bottom-color: #e79a92;
}

.num {
  text-align: right;
}

.rows-bar {
  gap: 2px;
  margin-bottom: 0;
}

.goods {
  table-layout: fixed;
  width: 100%;
  border-collapse: collapse;
}

.goods th {
  padding: 0 3px;
  border: 1px solid #c9c3a4;
  background: #f6f2dd;
  font-weight: normal;
  line-height: 7px;
  text-align: left;
  overflow: hidden;
}

.g-n {
  width: 28px;
}

.g-w {
  width: 88px;
}

.g-s {
  width: 9px;
}

.tabs.bottom {
  height: 13px;
  padding: 0 0 1px 2px;
}

/* bottom bars */
.mdi-tabs {
  flex: none;
  display: flex;
  height: 15px;
  padding: 3px 0 1px;
}

.mdi-tab {
  justify-content: flex-start;
  gap: 2px;
  min-width: 101px;
  padding: 0 2px;
  background: #b5b5b3;
}

.mdi-tab.current {
  padding: 0 1px;
  border: 1px solid #93a9c4;
  background: #abc8e8;
}

.mdi-tab .icon {
  width: 8px;
  height: 8px;
}

.status {
  flex: none;
  display: flex;
  align-items: center;
  gap: 3px;
  height: 12px;
  padding-left: 2px;
  color: #4a3c1e;
}

.hint {
  flex: 1;
}

.ind {
  height: 10px;
  padding: 0 1px;
  border: 1px solid #e2ddc4;
  line-height: 9px;
}

.ind.off {
  color: #b3a57a;
}

.ind .caret {
  margin-left: 1px;
}

.taskbar {
  flex: none;
  display: flex;
  height: 23px;
  background: #393844;
  color: #fff;
}

.task {
  width: 28px;
  border-bottom: 2px solid transparent;
}

.task svg {
  width: 10px;
  height: 10px;
}

.task svg.big {
  width: 14px;
  height: 14px;
}

.task.open {
  margin-left: 1px;
  border-bottom-color: #84b8e8;
}

.task.active {
  background: #5c5b66;
}

.tray {
  display: flex;
  align-items: center;
  gap: 6px;
  padding-right: 10px;
  font-family: Roboto, "Noto Sans", sans-serif;
}

.tray svg {
  width: 9px;
  height: 9px;
}

.tray svg.note {
  width: 14px;
  height: 14px;
  margin-left: 4px;
}

.note-n {
  font-size: 8px;
  fill: #fff;
}

.clock {
  display: flex;
  flex-direction: column;
  align-items: center;
  line-height: 10px;
}

/* site mark over the whole page */
.overlay {
  position: fixed;
  inset: 0;
  width: 100%;
  height: 100%;
  pointer-events: none;
}

.overlay text {
  font: bold 49px "Liberation Serif", serif;
  fill: #8c7c84;
  fill-opacity: .16;
}
```
